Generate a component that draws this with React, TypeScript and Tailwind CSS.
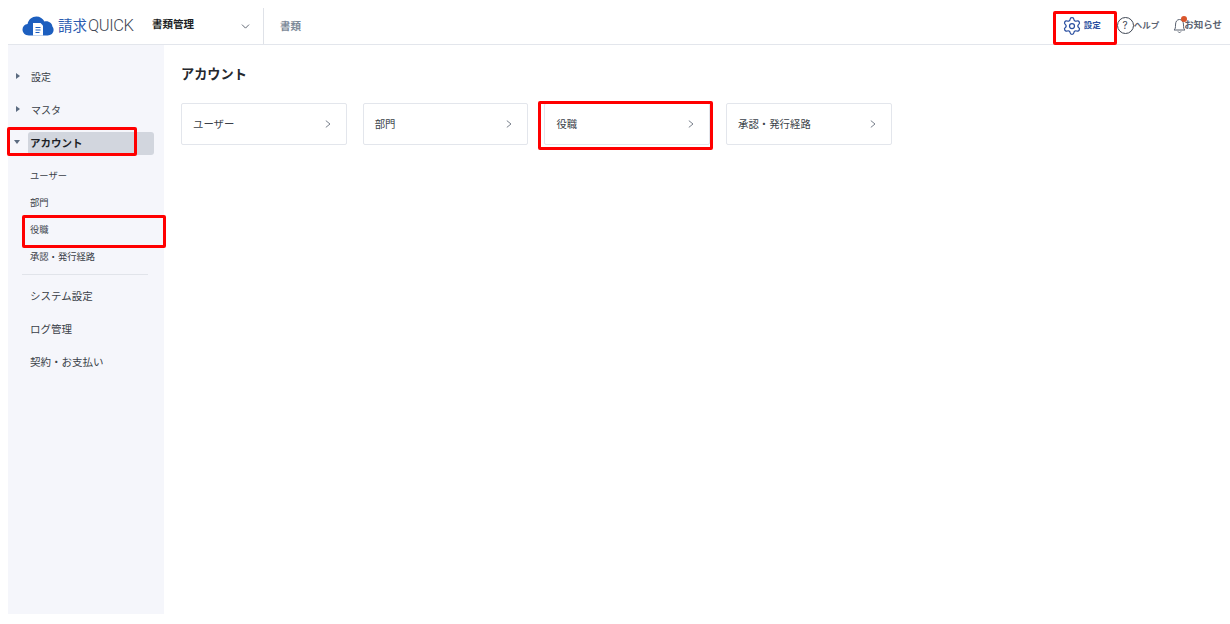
import { ChevronDown, Settings } from "lucide-react";

const font = "font-['Inter','Noto_Sans_CJK_JP',sans-serif]";

function Logo() {
  return (
    <svg width="32" height="20" viewBox="0 0 32 20">
      <path
        d="M7 19.5C3 19.5 0.5 17 0.5 13.6C0.5 10.6 2.6 8.4 5.6 8C6.4 3.4 10.2 0.5 14.4 0.5C18 0.5 21 2.6 22.4 5.6C23 5.4 23.6 5.3 24.2 5.3C27.6 5.3 30 7.6 30.4 10.4C31.2 11.4 31.6 12.6 31.6 13.8C31.6 17.2 29 19.5 25.6 19.5Z"
        fill="#1d5fbf"
      />
      <path d="M11 7H18.5L21 9.5V19.5H11Z" fill="#fff" />
      <path d="M13.5 11.5H18.5M13.5 14H18.5M13.5 16.5H17.5" stroke="#1d5fbf" strokeWidth="1.2" />
    </svg>
  );
}

function Header() {
  return (
    <header className="h-[45px] shrink-0 border-b border-[#e3e6ec] pt-[8px] flex items-center">
      <div className="ml-[14px] flex items-center">
        <Logo />
        <span className="ml-[4px] text-[14.5px] leading-none text-[#2a5bb0]">請求</span>
        <span className="ml-[1px] w-[47px] text-[16.5px] leading-none text-[#3f4754] font-['Roboto',sans-serif] font-light tracking-[-0.4px]">QUICK</span>
      </div>
      <span className="ml-[17px] mb-[2px] w-[87px] text-[10.5px] font-bold text-[#1c1f26]">書類管理</span>
      <ChevronDown size={13} className="text-[#4a5260]" strokeWidth={1.6} />
      <div className="ml-[11px] h-[36px] w-px bg-[#dfe2e8]" />
      <span className="ml-[16px] mt-[1px] text-[10.5px] font-bold text-[#7c8a99]">書類</span>
      <div className="ml-auto mr-[8px] mb-[1px] flex items-center">
        <Settings size={20} className="text-[#2a4fa0]" strokeWidth={1.5} />
        <span className="ml-[2px] text-[8.5px] font-bold text-[#2a4fa0]">設定</span>
        <span className="ml-[16px] flex h-[17px] w-[17px] items-center justify-center rounded-full border border-[#3f4754] text-[10px] text-[#3f4754]">?</span>
        <span className="text-[8.5px] font-bold text-[#5a6270]">ヘルプ</span>
        <div className="relative ml-[14px] flex items-center">
          <svg width="13" height="17" viewBox="0 0 13 17" fill="none" stroke="#5a6270" strokeWidth="1">
            <path d="M1 13C2.4 12 2.5 10.5 2.5 8C2.5 4.5 4 2.5 6.5 2.5C9 2.5 10.5 4.5 10.5 8C10.5 10.5 10.6 12 12 13Z" />
            <path d="M5 14.5C5.4 15.8 7.6 15.8 8 14.5" />
          </svg>
          <span className="absolute left-[8px] top-[-1px] h-[6px] w-[6px] rounded-full bg-[#d9552b]" />
          <span className="ml-[-2px] text-[9.5px] font-bold text-[#5a6270]">お知らせ</span>
        </div>
      </div>
    </header>
  );
}

function TreeItem({ label, open }: { label: string; open?: boolean }) {
  return (
    <div className={open ? "h-[33px] flex items-center pl-[6px]" : "h-[33px] flex items-center pl-[8px]"}>
      <span
        className={
          open
            ? "mb-[3px] h-0 w-0 border-x-[3px] border-t-[4px] border-x-transparent border-t-[#5b6b80]"
            : "mb-[4px] h-0 w-0 border-y-[3px] border-l-[4px] border-y-transparent border-l-[#5b6b80]"
        }
      />
      {open ? (
        <span className="ml-[8px] flex h-[23px] w-[126px] items-center rounded-[3px] bg-[#d2d6de] pl-[2px] text-[10.5px] font-bold text-[#1c1f26]">{label}</span>
      ) : (
        <span className="ml-[11px] text-[10px] text-[#3a3f48]">{label}</span>
      )}
    </div>
  );
}

function Sidebar() {
  return (
    <aside className="w-[156px] h-[569px] shrink-0 bg-[#f5f6fb] pt-[16px]">
      <TreeItem label="設定" />
      <TreeItem label="マスタ" />
      <TreeItem label="アカウント" open />
      <div className="mt-[2px] pl-[22px] text-[9.3px] text-[#3a3f48]">
        {["ユーザー", "部門", "役職", "承認・発行経路"].map((s) => (
          <div key={s} className="h-[27px] flex items-center">{s}</div>
        ))}
      </div>
      <div className="ml-[14px] mt-[4px] mb-[5px] h-px w-[126px] bg-[#e1e4ea]" />
      <div className="pl-[22px] text-[10.5px] text-[#3a3f48]">
        {["システム設定", "ログ管理", "契約・お支払い"].map((s) => (
          <div key={s} className="h-[33px] flex items-center">{s}</div>
        ))}
      </div>
    </aside>
  );
}

function Main() {
  const cards = ["ユーザー", "部門", "役職", "承認・発行経路"];
  return (
    <main className="flex-1 pl-[17px] pt-[19px]">
      <h1 className="h-[20px] text-[13.2px] leading-[20px] font-bold text-[#25282e]">アカウント</h1>
      <div className="mt-[19px] flex gap-[16px]">
        {cards.map((c) => (
          <div key={c} className="h-[42px] w-[165.7px] rounded-[2px] border border-[#e3e6ec] bg-white pl-[11px] pr-[15px] pt-[2px] flex items-center justify-between">
            <span className="text-[10.4px] text-[#3a3f48]">{c}</span>
            <svg width="6" height="8" viewBox="0 0 6 8" fill="none" stroke="#6b7380" strokeWidth="0.9" className="mb-[2px]">
              <path d="M0.8 0.6L5 4L0.8 7.4" />
            </svg>
          </div>
        ))}
      </div>
    </main>
  );
}

export default function App() {
  return (
    <div className={`relative w-[1230px] h-[624px] overflow-hidden bg-white pl-2 flex flex-col ${font}`}>
      <Header />
      <div className="flex flex-1">
        <Sidebar />
        <Main />
      </div>
      {/* red annotation boxes */}
      <div className="absolute left-[1053px] top-[11px] h-[34px] w-[64px] rounded-[2px] border-[3px] border-[#ff0000]" />
      <div className="absolute left-[7px] top-[127px] h-[29px] w-[130px] rounded-[2px] border-[3px] border-[#ff0000]" />
      <div className="absolute left-[22px] top-[215px] h-[33px] w-[144px] rounded-[2px] border-[3px] border-[#ff0000]" />
      <div className="absolute left-[538px] top-[101px] h-[49px] w-[175px] rounded-[2px] border-[3px] border-[#ff0000]" />
    </div>
  );
}
